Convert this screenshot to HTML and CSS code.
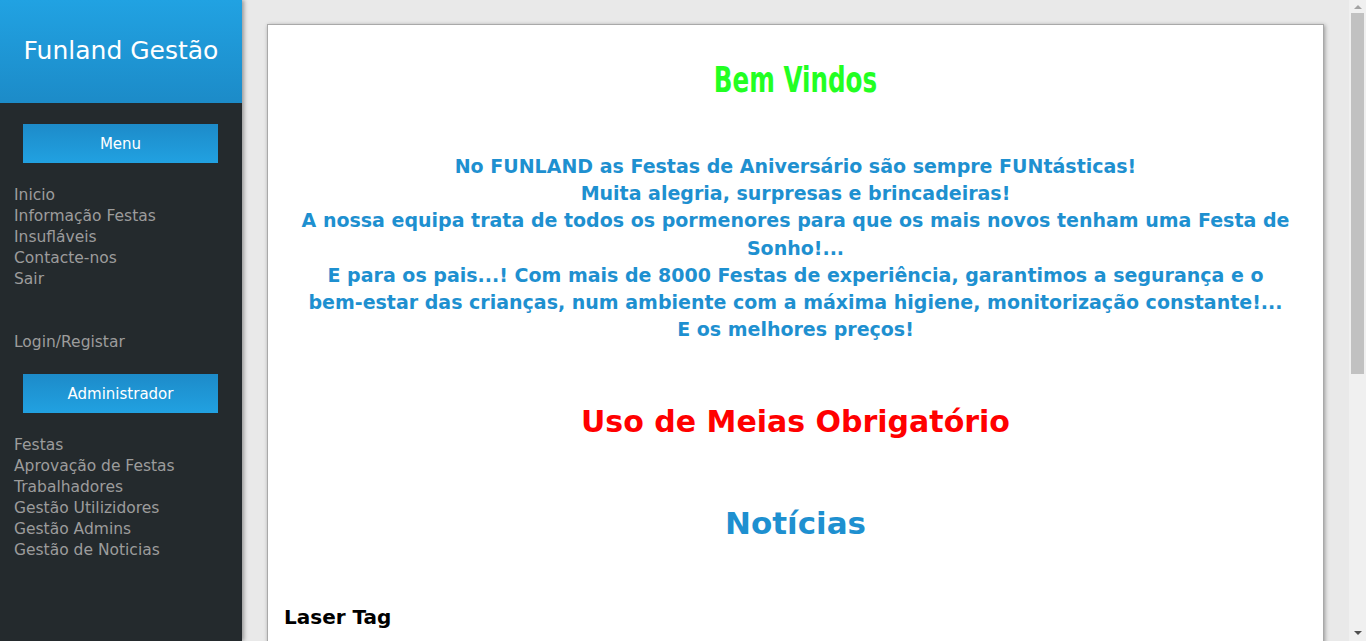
FILE: index.html
```html
<!DOCTYPE html>
<html lang="pt">
<head>
<meta charset="utf-8">
<title>Funland Gestão</title>
<link rel="stylesheet" href="styles.css">
</head>
<body>
<div class="layout">
  <aside class="sidebar">
    <div class="brand">Funland Gestão</div>
    <div class="side-body">
      <div class="side-btn">Menu</div>
      <nav class="links">
        <a href="#">Inicio</a>
        <a href="#">Informação Festas</a>
        <a href="#">Insufláveis</a>
        <a href="#">Contacte-nos</a>
        <a href="#">Sair</a>
      </nav>
      <nav class="links login">
        <a href="#">Login/Registar</a>
      </nav>
      <div class="side-btn">Administrador</div>
      <nav class="links">
        <a href="#">Festas</a>
        <a href="#">Aprovação de Festas</a>
        <a href="#">Trabalhadores</a>
        <a href="#">Gestão Utilizidores</a>
        <a href="#">Gestão Admins</a>
        <a href="#">Gestão de Noticias</a>
      </nav>
    </div>
  </aside>
  <main class="main">
    <section class="card">
      <h1 class="welcome"><span class="welcome-text">Bem Vindos</span></h1>
      <p class="intro">No FUNLAND as Festas de Aniversário são sempre FUNtásticas!<br>
      Muita alegria, surpresas e brincadeiras!<br>
      A nossa equipa trata de todos os pormenores para que os mais novos tenham uma Festa de Sonho!...<br>
      E para os pais...! Com mais de 8000 Festas de experiência, garantimos a segurança e o <span class="nowrap">bem-estar</span> das crianças, num ambiente com a máxima higiene, monitorização constante!...<br>
      E os melhores preços!</p>
      <h2 class="warning">Uso de Meias Obrigatório</h2>
      <h2 class="news-title">Notícias</h2>
      <article class="news">
        <h3 class="news-head">Laser Tag</h3>
      </article>
    </section>
  </main>
  <div class="scrollbar" aria-hidden="true">
    <div class="arrow-up"></div>
    <div class="track"><div class="thumb"></div></div>
    <div class="arrow-down"></div>
  </div>
</div>
</body>
</html>
```

FILE: styles.css
```css
html, body {
  margin: 0;
  padding: 0;
  overflow: hidden;
}
body {
  background: #e9e9e9;
  font-family: "DejaVu Sans", "Noto Sans", sans-serif;
}
.layout {
  display: flex;
  align-items: flex-start;
  height: 100vh;
}
.sidebar {
  width: 242px;
  flex: 0 0 242px;
  height: 100vh;
  background: #242a2d;
  box-shadow: 2px 0 4px rgba(0,0,0,0.35);
  position: relative;
  z-index: 1;
}
.brand {
  height: 103px;
  display: flex;
  align-items: center;
  justify-content: center;
  color: #fff;
  font-size: 25px;
  padding-bottom: 2px;
  box-sizing: border-box;
  background: linear-gradient(#21a2e2, #1c8bc8);
}
.side-body {
  padding: 21px 0 0 14px;
}
.side-btn {
  width: 195px;
  height: 39px;
  margin-left: 9px;
  display: flex;
  align-items: center;
  justify-content: center;
  color: #fff;
  font-size: 15px;
  background: linear-gradient(#1d8bc9, #21a1e1);
}
.links {
  display: flex;
  flex-direction: column;
  padding: 22px 0 20px;
}
.links a {
  color: #9c9c9c;
  text-decoration: none;
  font-size: 15.5px;
  line-height: 21px;
}
.links.login {
  padding: 22px 0 21px;
}
.main {
  flex: 1;
  min-width: 0;
  padding: 24px 25px 40px;
}
.card {
  background: #fff;
  border: 1px solid #a9a9a9;
  box-shadow: 1px 1px 4px rgba(0,0,0,0.35);
  padding: 30px 16px 40px;
  min-height: 900px;
}
.welcome {
  margin: 0;
  text-align: center;
  color: #22ff22;
  font-family: "DejaVu Sans Condensed", "DejaVu Sans", sans-serif;
  font-weight: bold;
  font-size: 36px;
  line-height: 50px;
}
.welcome-text {
  display: inline-block;
  transform: scaleX(0.76);
}
.intro {
  margin: 48px 0 0;
  text-align: center;
  color: #1e90d0;
  font-weight: bold;
  font-size: 19px;
  line-height: 27.2px;
}
.nowrap {
  white-space: nowrap;
}
.warning {
  margin: 59px 0 0;
  text-align: center;
  color: #ff0000;
  font-size: 30px;
  line-height: 40px;
}
.news-title {
  margin: 61px 0 0;
  text-align: center;
  color: #1e90d0;
  font-size: 31px;
  line-height: 40px;
}
.news {
  margin-top: 60px;
}
.news-head {
  margin: 0;
  color: #000;
  font-size: 20px;
  line-height: 28px;
}
.scrollbar {
  flex: 0 0 17px;
  width: 17px;
  height: 100vh;
  background: #f0f0f0;
  display: flex;
  flex-direction: column;
  align-items: center;
}
.arrow-up {
  margin-top: 5px;
  width: 0;
  height: 0;
  border-left: 4px solid transparent;
  border-right: 4px solid transparent;
  border-bottom: 4px solid #a3a3a3;
}
.track {
  flex: 1;
  width: 13px;
  padding-top: 4px;
}
.thumb {
  height: 361px;
  background: #c1c1c1;
}
.arrow-down {
  margin-bottom: 6px;
  width: 0;
  height: 0;
  border-left: 4px solid transparent;
  border-right: 4px solid transparent;
  border-top: 4px solid #505050;
}
```
